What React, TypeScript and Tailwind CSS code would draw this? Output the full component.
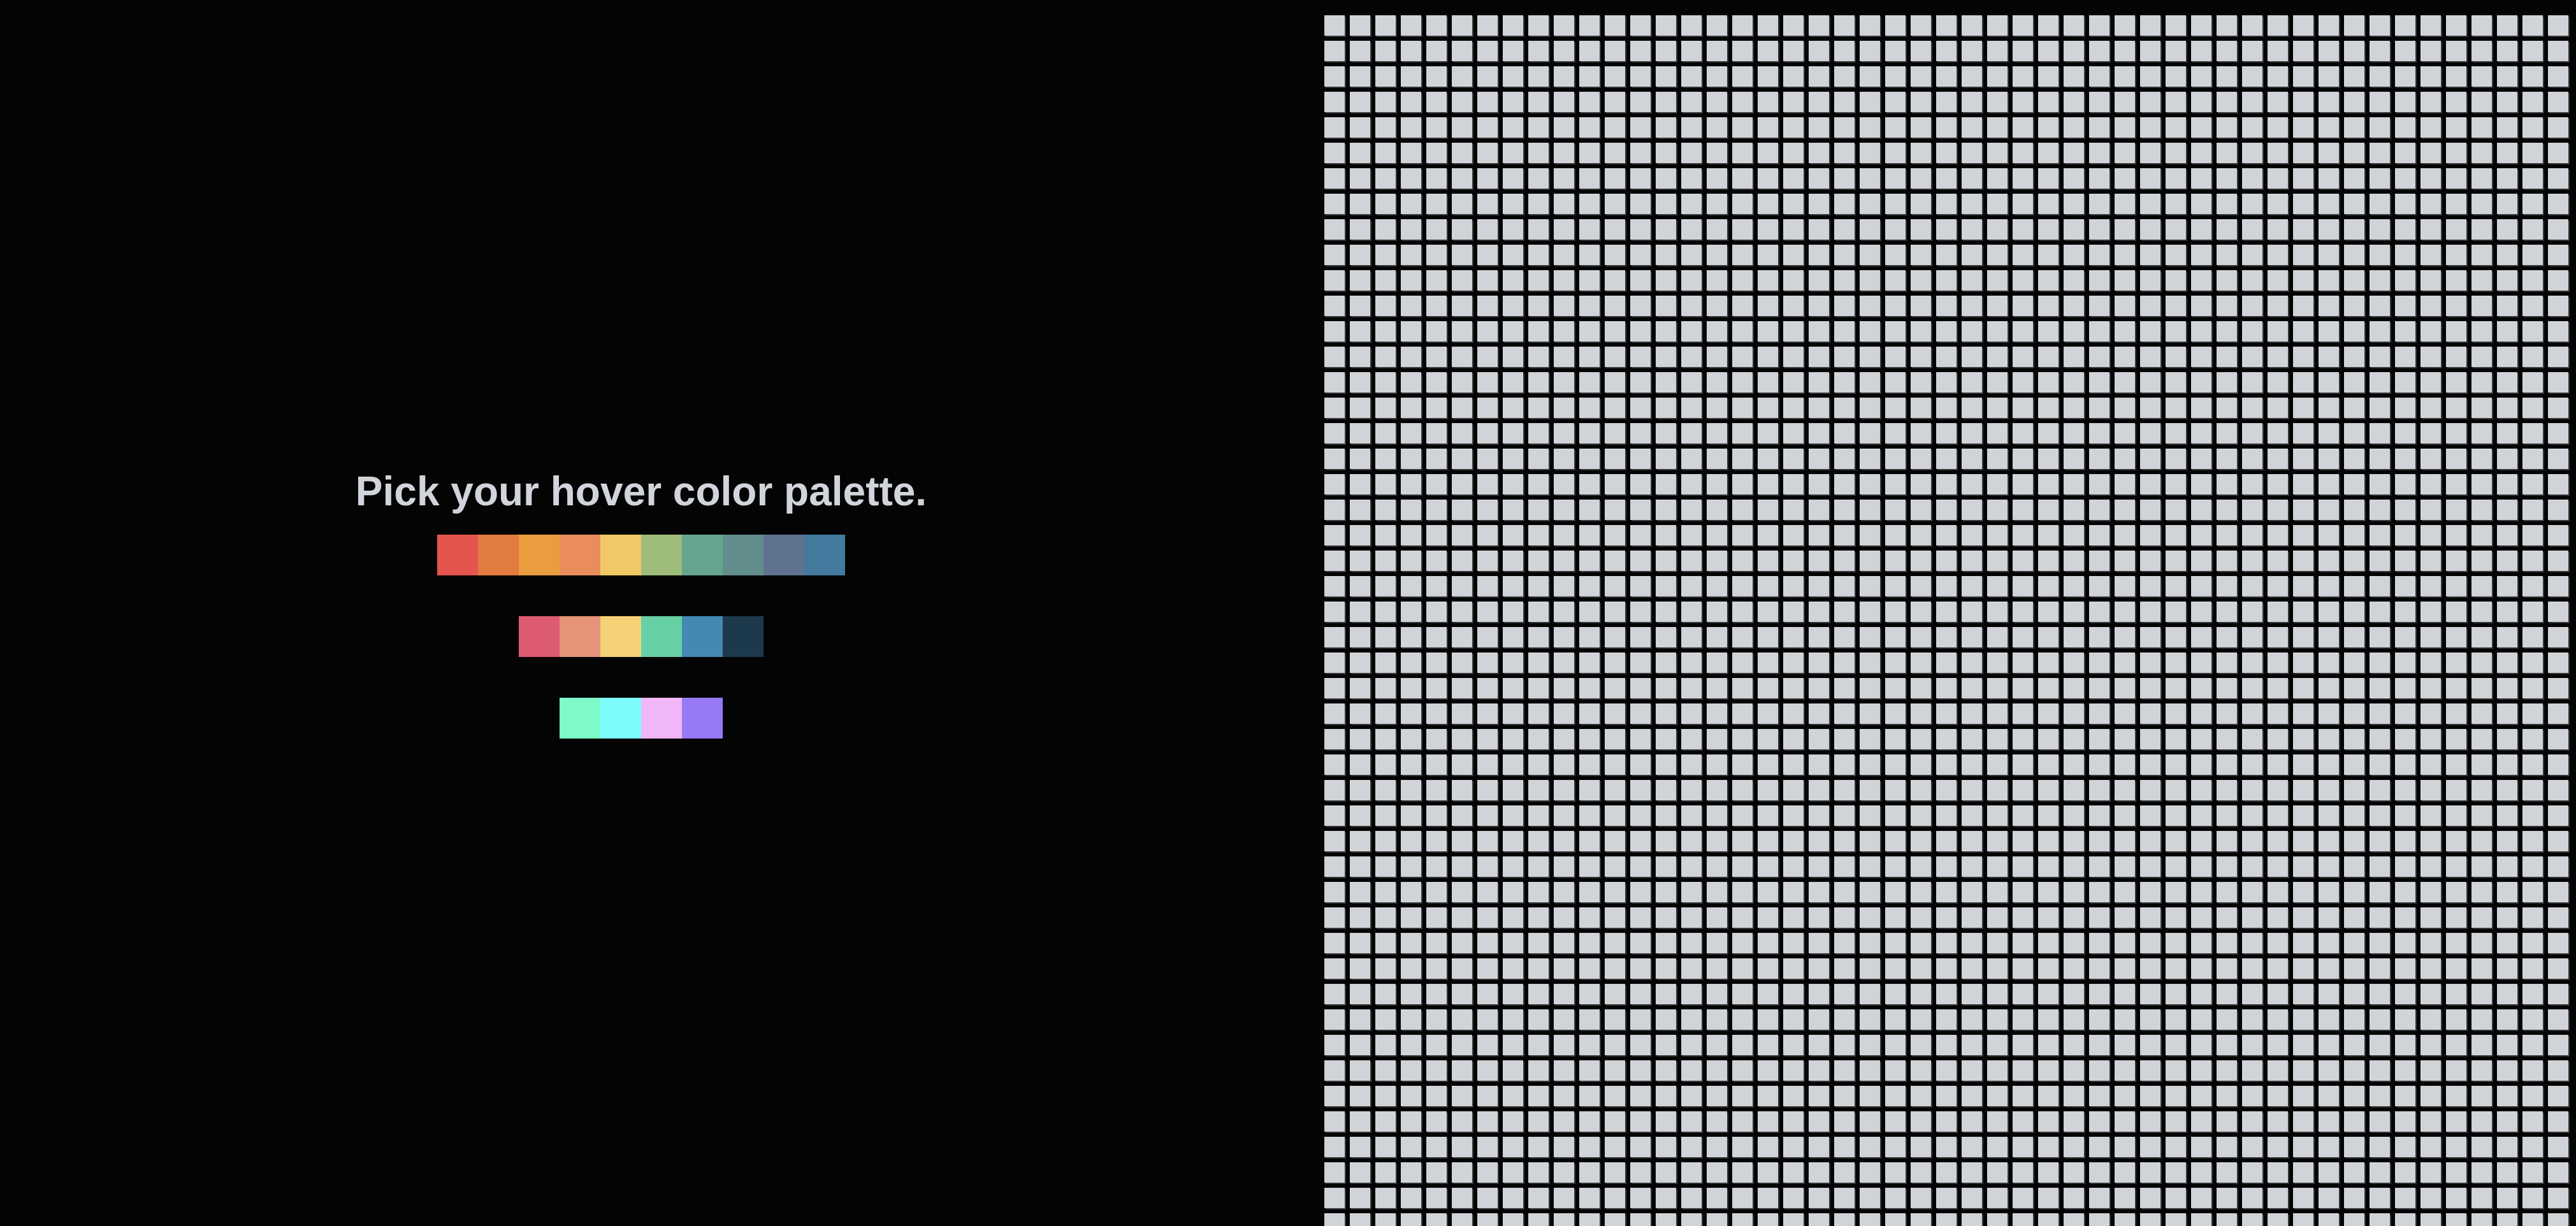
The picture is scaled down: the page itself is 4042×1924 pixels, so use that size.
import React from "react";

const p1 = ["#e5554e", "#e27b40", "#ea9d3f", "#ea8d5d", "#f0c966", "#9dbc79", "#65a58e", "#618d8c", "#5f738f", "#437a9e"];
const p2 = ["#dc5a72", "#e79578", "#f5d277", "#67d1a5", "#4389b1", "#1c3a4c"];
const p3 = ["#7dfac8", "#7cfcfd", "#f1b6f7", "#9779f5"];

function Palette({ colors, last }: { colors: string[]; last?: boolean }) {
  return (
    <div className={last ? "flex" : "flex mb-16"}>
      {colors.map((c, i) => (
        <div key={i} className="w-16 h-16" style={{ backgroundColor: c }} />
      ))}
    </div>
  );
}

export default function App() {
  const cells = Array.from({ length: 49 * 49 }, (_, i) => i);
  return (
    <div className="flex h-screen w-full overflow-hidden bg-[#040404]">
      <div className="w-[2012px] shrink-0 h-full flex flex-col items-center justify-center pb-[26px]">
        <h1
          className="text-[64px] leading-none font-bold text-[#d1d5db] mb-[36px] h-16 whitespace-nowrap"
          style={{ fontFamily: '"Liberation Sans", Arial, sans-serif' }}
        >
          Pick your hover color palette.
        </h1>
        <Palette colors={p1} />
        <Palette colors={p2} />
        <Palette colors={p3} last />
      </div>
      <div className="pl-[66px] pt-6">
        <div className="grid grid-cols-[repeat(49,32px)] gap-2">
          {cells.map((i) => (
            <div key={i} className="w-8 h-8 bg-[#d0d4d8] shadow-[2px_2px_0_#37383a]" />
          ))}
        </div>
      </div>
    </div>
  );
}
